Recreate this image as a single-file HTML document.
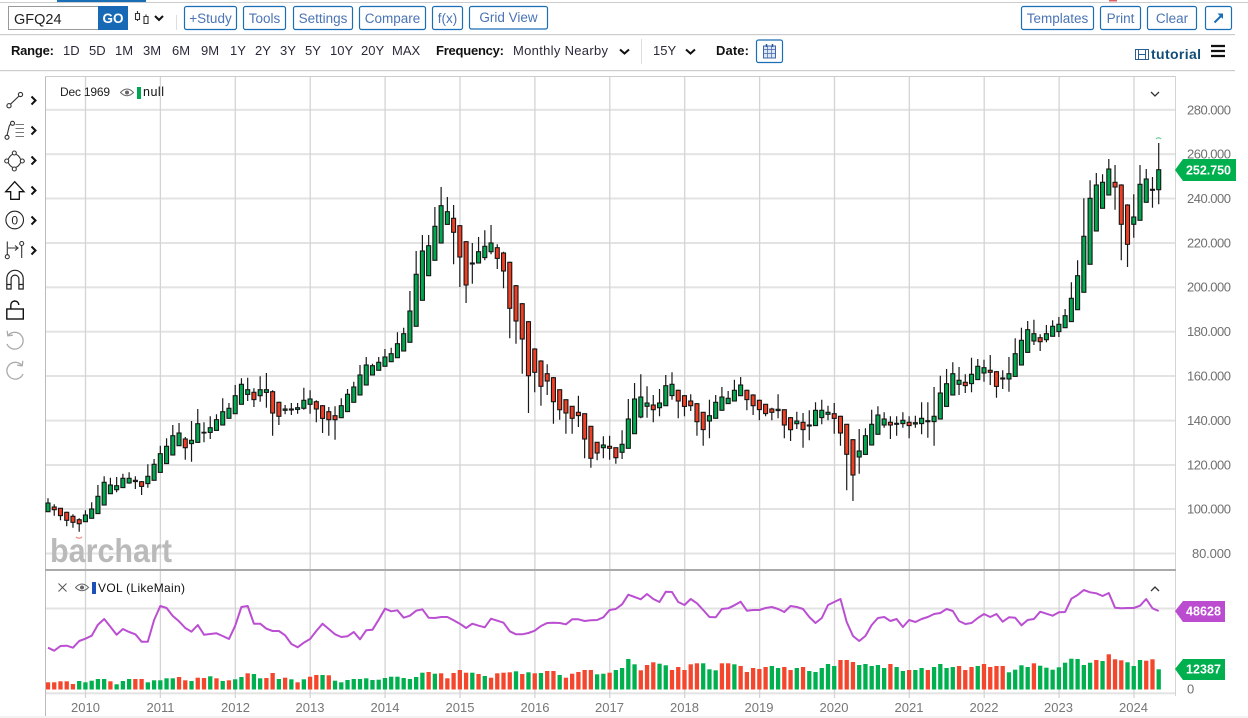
<!DOCTYPE html>
<html>
<head>
<meta charset="utf-8">
<style>
html,body{margin:0;padding:0;background:#fff;width:1248px;height:718px;overflow:hidden}
svg{position:absolute;left:0;top:0;display:block}
text{font-family:"Liberation Sans",Arial,sans-serif}
.b{fill:#fff;stroke:#1a6eb5;stroke-width:1.2}
.bt{font-size:13.5px;fill:#4a74b4;text-anchor:middle}
.r{font-size:13px;fill:#2a2a3a}
.l{font-size:13px;font-weight:bold;fill:#111}
.p{font-size:13px;fill:#707070}
.y{font-size:13px;fill:#777;text-anchor:middle}
.w{font-size:12.5px;font-weight:bold;fill:#fff}
.k{fill:none;stroke:#111;stroke-width:2}
.i{fill:none;stroke:#333;stroke-width:1.1}
.u{fill:none;stroke:#aaa;stroke-width:1.3}
</style>
</head>
<body>
<svg id="s" width="1248" height="718" viewBox="0 0 1248 718" xmlns="http://www.w3.org/2000/svg">
<rect x="0" y="2" width="1248" height="1" fill="#ccc"/>
<rect x="57" y="0" width="89" height="2" fill="#1a6eb5"/>
<rect x="1109" y="0" width="8" height="1.5" fill="#e06060"/>
<rect x="0" y="34" width="1235" height="1.2" fill="#ccc"/>
<rect x="0" y="70" width="1235" height="1.2" fill="#ccc"/>

<rect x="8.5" y="6.5" width="90" height="23" fill="#fff" stroke="#999" stroke-width="1"/>
<text x="14" y="24" font-size="14.5" fill="#222">GFQ24</text>
<rect x="98" y="6" width="30" height="24" fill="#1769b5"/>
<text x="113" y="23" font-size="13.5" font-weight="bold" fill="#fff" text-anchor="middle">GO</text>
<path d="M135.5 13.5h4v6h-4zM137.5 11v2.5M137.5 19.5v1.5M144 16.5h4v7h-4zM146 14.5v2" class="i"/>
<polyline points="155,16 159,20 163,16" class="k"/>
<rect x="176" y="15" width="1" height="15" fill="#ddd"/>

<rect class="b" x="184.5" y="6.5" width="52" height="23" rx="2"/><text class="bt" x="210.5" y="23">+Study</text>
<rect class="b" x="243.5" y="6.5" width="42" height="23" rx="2"/><text class="bt" x="264.5" y="23">Tools</text>
<rect class="b" x="293.5" y="6.5" width="59" height="23" rx="2"/><text class="bt" x="323" y="23">Settings</text>
<rect class="b" x="359.5" y="6.5" width="66" height="23" rx="2"/><text class="bt" x="392.5" y="23">Compare</text>
<rect class="b" x="432.5" y="6.5" width="30" height="23" rx="2"/><text class="bt" x="447.5" y="23">f(x)</text>
<rect class="b" x="469.5" y="6.5" width="78" height="22.5" rx="2"/><text class="bt" x="508.5" y="22">Grid View</text>
<rect class="b" x="1021.5" y="6.5" width="72" height="23" rx="2"/><text class="bt" x="1057.5" y="23">Templates</text>
<rect class="b" x="1100.5" y="6.5" width="40" height="23" rx="2"/><text class="bt" x="1120.5" y="23">Print</text>
<rect class="b" x="1147.5" y="6.5" width="49" height="23" rx="2"/><text class="bt" x="1172" y="23">Clear</text>
<rect class="b" x="1205.5" y="6.5" width="26" height="23" rx="2"/>
<path d="M1214.5 22.5L1221 16" fill="none" stroke="#1a6eb5" stroke-width="2"/><path d="M1217.5 13.5h5.5v5.5z" fill="#1a6eb5"/>

<text class="l" x="11" y="55" textLength="43">Range:</text>
<text class="r" x="63" y="55">1D</text><text class="r" x="89" y="55">5D</text><text class="r" x="115" y="55">1M</text>
<text class="r" x="143" y="55">3M</text><text class="r" x="172" y="55">6M</text><text class="r" x="201" y="55">9M</text>
<text class="r" x="230" y="55">1Y</text><text class="r" x="255" y="55">2Y</text><text class="r" x="280" y="55">3Y</text>
<text class="r" x="305" y="55">5Y</text><text class="r" x="330" y="55">10Y</text><text class="r" x="361" y="55">20Y</text><text class="r" x="392" y="55">MAX</text>
<text class="l" x="436" y="55" textLength="68">Frequency:</text>
<text class="r" x="513" y="55" textLength="95">Monthly Nearby</text>
<polyline points="620,49.5 624.5,53.5 629,49.5" class="k"/>
<rect x="641" y="39" width="1" height="25" fill="#ddd"/>
<text class="r" x="653" y="55">15Y</text>
<polyline points="686,49.5 690.5,53.5 695,49.5" class="k"/>
<text class="l" x="716" y="55" textLength="33">Date:</text>
<rect class="b" x="756.5" y="40" width="26" height="22.5" rx="2"/>
<rect x="763.5" y="46" width="12" height="12" fill="#dfe6f3" stroke="#3f66a8"/>
<path d="M763.5 49.5h12M767.5 46v12M771.5 46v12M763.5 53.5h12" stroke="#3f66a8" stroke-width=".7"/>
<path d="M766.5 44v3M772.5 44v3" stroke="#245a9a" stroke-width="1.5"/>

<rect x="1135.5" y="49.5" width="13" height="10" fill="none" stroke="#2a5f8f"/>
<path d="M1138.5 49.5v10M1145.5 49.5v10M1138.5 54.5h7" stroke="#2a5f8f" fill="none"/>
<text x="1151" y="59" font-size="14" font-weight="bold" fill="#124d78" textLength="50">tutorial</text>
<path d="M1211 46h14M1211 51h14M1211 56h14" stroke="#111" stroke-width="2.2"/>

<g id="grid"></g>
<rect x="45" y="76" width="1" height="642" fill="#bbb"/>
<rect x="45" y="76" width="1131" height="1" fill="#ccc"/>
<rect x="1175" y="76" width="1" height="620" fill="#d4d4d4"/>
<rect x="45" y="569" width="1131" height="2" fill="#aaa"/>

<g id="chart"></g>

<text x="50" y="562" font-size="33" font-weight="bold" fill="#bababa" textLength="122" lengthAdjust="spacingAndGlyphs">barchart</text>

<path d="M76 537q3 2.5 6 0" fill="none" stroke="#f08a78" stroke-width="1.2"/>
<path d="M1156 139q2.5-2.5 5 0" fill="none" stroke="#6ccb9a" stroke-width="1.2"/>

<text x="60" y="96" font-size="12" fill="#222" textLength="50">Dec 1969</text>
<path d="M120.5 92.5q6.5-7 13 0q-6.5 6.5-13 0z" fill="none" stroke="#666"/><circle cx="127" cy="92.5" r="2" fill="#666"/>
<rect x="137" y="87" width="4" height="12" fill="#00a651"/>
<text x="143" y="96" font-size="12.5" fill="#111" textLength="21">null</text>
<polyline points="1151,92 1155,96 1159,92" fill="none" stroke="#333" stroke-width="1.3"/>

<path d="M58.5 583.5l8 8M66.5 583.5l-8 8" stroke="#555" stroke-width="1"/>
<path d="M75.5 587.5q6.5-7 13 0q-6.5 6.5-13 0z" fill="none" stroke="#666"/><circle cx="82" cy="587.5" r="2" fill="#666"/>
<rect x="92" y="582" width="4" height="12" fill="#1c4fb8"/>
<text x="98" y="592" font-size="12" fill="#111" textLength="87">VOL (LikeMain)</text>
<polyline points="1151,591 1155,587 1159,591" fill="none" stroke="#333" stroke-width="1.3"/>

<text class="p" x="1187" y="114.5" textLength="44">280.000</text><text class="p" x="1187" y="158.5" textLength="44">260.000</text>
<text class="p" x="1187" y="203" textLength="44">240.000</text><text class="p" x="1187" y="247.5" textLength="44">220.000</text>
<text class="p" x="1187" y="291.5" textLength="44">200.000</text><text class="p" x="1187" y="336" textLength="44">180.000</text>
<text class="p" x="1187" y="380.5" textLength="44">160.000</text><text class="p" x="1187" y="425" textLength="44">140.000</text>
<text class="p" x="1187" y="469.5" textLength="44">120.000</text><text class="p" x="1187" y="513.5" textLength="44">100.000</text>
<text class="p" x="1192" y="558" textLength="39">80.000</text>
<text class="p" x="1187" y="693.5">0</text>

<polygon points="1175,170 1183,159 1236,159 1236,181 1183,181" fill="#00b04f"/>
<text class="w" x="1186" y="174.5" textLength="45">252.750</text>
<polygon points="1175,611 1183,601 1225,601 1225,622 1183,622" fill="#bb4ccf"/>
<text class="w" x="1186" y="615.5" textLength="35">48628</text>
<polygon points="1175,669 1183,659 1225,659 1225,680 1183,680" fill="#00b04f"/>
<text class="w" x="1186" y="673.5" textLength="35">12387</text>

<text class="y" x="85.5" y="712">2010</text><text class="y" x="160.5" y="712">2011</text><text class="y" x="235.5" y="712">2012</text>
<text class="y" x="310" y="712">2013</text><text class="y" x="385" y="712">2014</text><text class="y" x="460" y="712">2015</text>
<text class="y" x="535" y="712">2016</text><text class="y" x="609.5" y="712">2017</text><text class="y" x="684.5" y="712">2018</text>
<text class="y" x="759" y="712">2019</text><text class="y" x="834" y="712">2020</text><text class="y" x="909" y="712">2021</text>
<text class="y" x="984" y="712">2022</text><text class="y" x="1058.5" y="712">2023</text><text class="y" x="1133.5" y="712">2024</text>

<!-- sidebar icons -->
<path class="i" d="M10.5 104.2L19 96"/><circle class="i" cx="9" cy="105.7" r="2.1"/><circle class="i" cx="20.5" cy="94.5" r="2.1"/>
<path class="i" d="M7 135.5L9 127q.6-2.5 2-3"/><circle class="i" cx="7" cy="137.3" r="2"/><circle class="i" cx="12.5" cy="123.3" r="2"/>
<path d="M15.5 124.5h8.5M15.5 128.5h8.5M15.5 132.5h8.5M15.5 136.5h8.5" stroke="#777" stroke-width="1"/>
<path class="i" d="M8.2 159.4Q10 155.5 12.6 154.4M16 154.4Q19 155.5 20.6 159.4M20.6 162.6Q19 166 16 167.4M12.6 167.4Q10 166 8.2 162.6"/>
<circle class="i" cx="6.7" cy="161" r="2"/><circle class="i" cx="14.3" cy="153" r="2"/><circle class="i" cx="22.3" cy="161" r="2"/><circle class="i" cx="14.3" cy="169" r="2"/>
<polygon points="14.7,181.7 24,191.7 19.3,191.7 19.3,199.3 10.7,199.3 10.7,191.7 5.7,191.7" fill="none" stroke="#111" stroke-width="1.3"/>
<circle cx="14.7" cy="220" r="8.8" fill="none" stroke="#222" stroke-width="1.1"/>
<text x="14.7" y="224.3" font-size="12" fill="#222" text-anchor="middle">0</text>
<path class="i" d="M7.3 241.5v13.2M21.7 245.5v12.5M8 248h9.5M15 245.5l3 2.5-3 2.5"/><circle class="i" cx="7.3" cy="256.7" r="2"/><circle class="i" cx="21.7" cy="243.5" r="2"/>
<path d="M6.8 289V278.5a8.2 8.2 0 0 1 16.4 0V289h-4.3V279a3.9 3.9 0 0 0-7.8 0V289zM6.8 284.5h4.3M18.9 284.5h4.3" fill="none" stroke="#222" stroke-width="1.2"/>
<rect x="6.8" y="309" width="16.5" height="10" fill="none" stroke="#111" stroke-width="1.4"/>
<path d="M10.8 309V305a4 4 0 0 1 8 0" fill="none" stroke="#111" stroke-width="1.4"/>
<path class="u" d="M8.4 335.2A8.4 8.4 0 1 1 7 344M7.2 330.8l.6 5 5-.6"/>
<path class="u" d="M21.6 365.2A8.4 8.4 0 1 0 23 374M22.8 360.8l-.6 5-5-.6"/>
<polyline class="k" points="31.5,96.5 35.5,100.5 31.5,104.5"/><polyline class="k" points="31.5,126.5 35.5,130.5 31.5,134.5"/>
<polyline class="k" points="31.5,156.5 35.5,160.5 31.5,164.5"/><polyline class="k" points="31.5,186.5 35.5,190.5 31.5,194.5"/>
<polyline class="k" points="31.5,216.5 35.5,220.5 31.5,224.5"/><polyline class="k" points="31.5,246.5 35.5,250.5 31.5,254.5"/>
<rect x="0" y="716" width="1248" height="2" fill="#f3f3f3"/>
</svg>
<script>
(function(){
var g=document.getElementById('grid'),c=document.getElementById('chart'),gh='',ch='';
[109.8,154.2,198.5,243,287.3,331.7,376,420.6,465,509,553.5,608.5,693.3].forEach(function(y){gh+='<rect x="46" y="'+(y-1)+'" width="1129" height="2" fill="#e3e3e3"/>';});
[85.5,160.4,235.3,310.2,385.1,460,534.9,609.8,684.7,759.6,834.5,909.3,984.2,1059.1,1134].forEach(function(x){gh+='<line x1="'+x+'" y1="77" x2="'+x+'" y2="698" stroke="#d4d4d4" stroke-width="1.3"/>';});
g.innerHTML=gh;

var A=[[385,399,425,425,0],[403,411,419,437,1],[415,415,437,451,1],[425,427,451,469,1],[433,439,457,473,1],[445,449,461,485,1],[421,435,455,455,0],[397,417,445,445,0],[345,379,431,431,0],[319,337,405,405,0],[323,345,371,371,0],[321,347,359,367,0],[311,325,353,353,0],[307,325,339,341,0],[319,331,335,357,1],[333,335,349,375,1],[283,319,341,353,0],[267,283,331,331,0],[227,251,307,307,0],[205,229,281,281,0],[165,197,255,255,0],[159,189,227,227,0],[201,207,233,269,1],[153,211,221,275,0],[117,161,217,217,0],[157,187,189,217,0],[139,173,187,207,0],[133,149,181,181,0],[85,125,165,165,0],[99,115,145,145,0],[45,77,131,131,0],[25,43,103,103,0],[23,59,73,93,0],[55,67,89,111,1],[19,59,77,95,0],[9,59,67,113,0],[61,65,129,197,1],[95,97,139,165,1],[105,117,121,133,0],[99,117,120,135,0],[99,113,118,131,0],[53,91,115,119,0],[61,87,103,131,0],[91,95,117,157,1],[105,107,145,189,1],[111,125,149,197,1],[109,137,149,209,1]];
var B=[[655,677,713,713,0],[627,643,695,695,0],[605,621,667,667,0],[555,585,645,645,0],[531,555,615,615,0],[551,557,585,585,0],[531,547,571,571,0],[507,531,559,559,0],[503,521,545,545,0],[457,491,533,533,0],[443,461,513,513,0],[333,393,487,487,0],[213,283,439,439,0],[165,213,361,361,0],[165,197,287,287,0],[81,139,241,241,0],[21,77,189,189,0],[51,95,133,133,0],[75,115,157,253,1],[135,137,231,321,1],[183,185,315,369,1],[189,249,252,311,0],[171,215,249,249,0],[151,199,233,241,0],[135,189,215,223,0],[193,203,235,267,1],[215,219,273,325,1],[245,247,385,475,1],[315,317,423,491,1],[369,371,477,581,1],[423,425,587,699,1],[505,507,577,637,1],[541,543,619,677,1],[553,581,603,645,1],[591,593,665,731,1],[629,629,689,719,1],[659,659,699,761,1],[679,679,715,761,1],[647,697,707,741,1],[701,701,777,835,1],[739,739,835,863,1],[787,787,819,841,1],[769,795,803,835,0],[767,799,805,839,1],[803,803,833,851,1],[751,793,817,837,0],[657,717,805,805,0],[609,657,761,761,0]];
var C=[[103,171,231,235,0],[139,189,199,233,0],[165,195,209,247,1],[147,189,203,229,0],[105,137,197,197,0],[97,133,167,179,0],[149,151,183,235,1],[165,167,199,229,1],[163,183,197,213,1],[189,191,245,287,1],[217,217,269,317,1],[179,227,243,295,0],[165,187,235,235,0],[141,171,211,211,0],[153,175,191,191,0],[119,151,183,183,0],[111,135,167,167,0],[149,151,179,211,1],[163,165,197,225,1],[179,181,209,241,1],[193,193,221,229,1],[203,207,217,241,1],[163,208,212,235,0],[209,209,255,295,1],[231,233,269,303,1],[215,243,251,267,0],[219,247,269,323,1],[211,255,258,301,0],[187,211,257,257,0],[179,211,233,253,0],[197,217,223,241,0],[189,221,235,281,1],[227,229,279,317,1],[253,253,343,451,1],[297,299,405,483,1],[267,333,351,401,0],[265,287,343,343,0],[209,253,315,315,0],[199,225,283,283,0],[217,237,255,263,0],[229,247,255,297,1],[229,250,253,287,0],[217,241,251,263,0],[229,247,257,295,1],[227,248,252,263,0],[187,235,251,283,0],[187,242,245,293,0]];
var D=[[771,859,875,947,0],[737,789,867,867,0],[717,761,829,829,0],[697,731,795,795,0],[711,751,763,795,0],[733,757,767,789,1],[683,733,761,787,0],[687,709,749,749,0],[689,713,729,755,0],[675,721,727,765,1],[723,725,769,803,1],[721,744,747,777,0],[681,731,747,785,0],[625,671,739,739,0],[593,631,705,705,0],[573,599,667,667,0],[569,611,633,645,0],[613,623,635,663,1],[585,611,629,637,0],[571,589,619,619,0],[561,583,605,621,0],[537,557,593,593,0],[457,505,575,575,0],[391,437,539,539,0],[205,319,487,487,0],[151,205,403,403,0],[129,165,303,303,0],[133,157,235,235,0],[87,117,195,195,0],[105,157,171,239,1],[163,165,283,391,1],[223,225,343,411,1],[193,261,283,323,0],[105,163,271,271,0],[117,147,217,217,0],[141,178,181,233,0],[39,119,179,223,0]];
function X(i){return 48+6.24*i;}
var n=0,wick='',body='';
function seg(arr,o){arr.forEach(function(d){var x=X(n),p=function(z){return (o+z/3).toFixed(1);};
 if(d[0]!==d[3])wick+='M'+x.toFixed(2)+' '+p(d[0])+'V'+p(d[3]);
 var t=o+d[1]/3,b=o+d[2]/3;
 body+='<rect x="'+(x-2).toFixed(2)+'" y="'+t.toFixed(1)+'" width="4" height="'+Math.max(b-t,.6).toFixed(1)+'" fill="'+(d[4]?'#ee3f24':'#00a84f')+'" stroke="#151515" stroke-width="1.1"/>';
 n++;});}
seg(A,370);seg(B,180);seg(C,340);seg(D,130);
ch+='<path d="'+wick+'" stroke="#1a1a1a" stroke-width="1.2" fill="none"/>'+body;

var V=[];
[607,607,604,604,612,603,607,602,597,597,604,613,603,597,597,597,607,601,601,595,595,591,601,603,593,594,589,595,603,601,598,591,580,582,595,594,579,597,593,598,607].forEach(function(z){V.push(480+z/3);});
[313,305,300,300,301,317,322,315,312,312,310,315,314,309,305,305,309,312,306,293,291,296,295,310,294,285,293,293,297,303,308,295,293,292,289,297,292,295,294,288,288,300,308,296,291,285,285,298,296,293,285,279,252,268,286,270,262,266,271,285,276,285,268,265,265,283,286,265,265,268,273,291].forEach(function(z){V.push(575+z/3);});
V=V.concat([668,669,667,666,668,667,670,668,667,671,672,668,664,666,660,660,662,665,664,666,665,668,664,667,671,670,670,668,670,667,664,668,667,666,670,667,666,664,667,666]);
[318,337,329,316,321,310,317,323,329,322,308,296,297,315,308,300,303,283,298,301,307,318,300,302,298,328].forEach(function(z){V.push(560+z/3);});
var vc=[1,1,1,1,1,0,0,0,0,0,1,0,0,0,1,1,0,0,0,0,0,1,1,0,1,1,0,1,0,1,0,0,1,0,0,1,1,0,1,0,1,
0,1,1,0,1,0,0,0,0,0,0,0,0,0,0,0,0,0,0,0,1,0,1,1,1,1,1,0,1,0,1,1,1,1,0,1,0,1,0,1,1,0,1,1,1,1,1,0,0,1,0,0,0,0,1,1,1,0,0,1,1,1,1,1,0,0,0,1,1,0,1,1,
1,1,1,0,0,1,1,0,1,0,0,0,0,0,1,1,1,0,0,0,0,0,1,0,0,1,0,0,1,0,0,0,0,1,1,1,0,1,1,1,
1,0,0,0,0,1,0,0,0,0,0,0,0,0,0,1,0,1,1,1,0,0,0,1,1,0];
V.forEach(function(t,i){var x=X(i)-2.15,w=4.3;if(x<46){w-=46-x;x=46;}
 ch+='<rect x="'+x.toFixed(2)+'" y="'+t.toFixed(1)+'" width="'+w.toFixed(2)+'" height="'+(689.5-t).toFixed(1)+'" fill="'+(vc[i]?'#f4462d':'#00b04f')+'"/>';});

var L=[];
[503,512,498,497,503,483,476,467,434,417,440,464,447,456,463,485,485,420,378,384,408,424,444,455,435,464,462,460,468,477,437,381,378,431,431,446,453,453,466,492,502].forEach(function(z){L.push(480+z/3);});
[203,192,168,146,162,178,186,184,171,193,166,164,134,101,109,106,128,122,107,103,128,129,126,126,136,146,159,146,152,157,131,137,143,169,178,178,174,167,153,144,143,144,148,133,133,138,136,135,127,105,102,88,59,66,73,57,72,81,50,51,81,90,72,85,105,126,127,102,100,91,80,107].forEach(function(z){L.push(575+z/3);});
L=L.concat([610,610,608,607,609,612,606,607,609,617,623,618,605,602,599,622,636,641,636,625,618,617,621,619,627,620,622,619,617,614,613,609,611,621,624,623,618,614,617,614]);
[185,172,173,196,180,177,155,161,167,157,156,116,105,90,97,100,108,99,143,145,144,144,137,117,145,153].forEach(function(z){L.push(560+z/3);});
ch+='<polyline fill="none" stroke="#bb4fd2" stroke-width="2" stroke-linejoin="round" points="'+L.map(function(y,i){return X(i).toFixed(1)+','+y.toFixed(1);}).join(' ')+'"/>';
c.innerHTML=ch;
})();
</script>
</body>
</html>
